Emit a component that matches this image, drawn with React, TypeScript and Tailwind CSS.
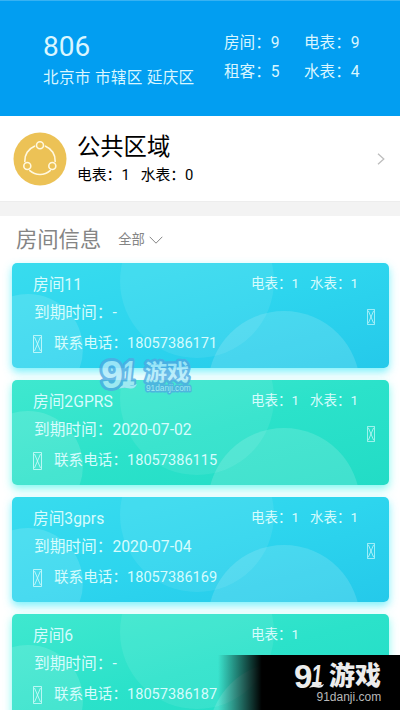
const rooms = [
  { name: '房间11', due: '-', phone: '18057386171', power: 1, water: 1, tone: 'sky' },
  { name: '房间2GPRS', due: '2020-07-02', phone: '18057386115', power: 1, water: 1, tone: 'mint' },
  { name: '房间3gprs', due: '2020-07-04', phone: '18057386169', power: 1, water: 1, tone: 'sky' },
  { name: '房间6', due: '-', phone: '18057386187', power: 1, water: null, tone: 'mint' },
];

const tones: Record<string, string> = {
  sky: 'from-[#38dcee] via-[#2dd5ee] to-[#25c9ea] shadow-[0_4px_9px_rgba(70,235,250,0.7)]',
  mint: 'from-[#3fe8cf] via-[#2be2ca] to-[#22dcc6] shadow-[0_4px_9px_rgba(80,245,235,0.7)]',
};

function MissingGlyph({ className }: { className: string }) {
  return (
    <svg className={className} viewBox="0 0 9 18" preserveAspectRatio="none" fill="none" stroke="currentColor" strokeWidth="0.8">
      <path d="M.5 .5h8v17h-8z M1.5 2l6 14 M7.5 2l-6 14" />
    </svg>
  );
}

function Header() {
  return (
    <header className="flex h-[116px] border-t border-[#37b2f3] bg-[#029ef1] pl-[43px] text-[15.6px] text-[#d9f6ff]">
      <div className="w-[181px] pt-[30px]">
        <div className="h-8 text-[28px] leading-8">806</div>
        <div className="mt-[3px] h-6 leading-6 tracking-[0.02em] whitespace-nowrap">北京市 市辖区 延庆区</div>
      </div>
      <div className="grid h-[59px] grid-cols-[80px_80px] grid-rows-[29px_29px] pt-[28px] leading-[29px] whitespace-nowrap">
        <span>房间：9</span>
        <span>电表：9</span>
        <span>租客：5</span>
        <span>水表：4</span>
      </div>
    </header>
  );
}

function PublicArea() {
  return (
    <section className="flex h-[86px] items-center border-b border-[#ededed] pr-[15px] pl-[13px] text-black">
      <svg className="size-[54px] shrink-0" viewBox="0 0 54 54" fill="none" stroke="#fff8df" strokeWidth="1.6">
        <circle cx="27" cy="27" r="26.5" fill="#ecc256" stroke="none" />
        <path d="M21.5 14.2A15.5 15.5 0 0 0 11.8 29.5 M32.5 14.2A15.5 15.5 0 0 1 42.2 29.5 M16.8 38.6A15.5 15.5 0 0 0 37.2 38.6" strokeLinecap="round" />
        <circle cx="27" cy="13.3" r="3.5" />
        <circle cx="14.3" cy="34" r="3.5" />
        <circle cx="39.3" cy="34" r="3.5" />
      </svg>
      <div className="ml-[10px] flex-1">
        <div className="h-8 text-[23.3px] leading-8">公共区域</div>
        <div className="flex h-6 gap-[11px] text-[14.8px] leading-6">
          <span>电表：1</span>
          <span>水表：0</span>
        </div>
      </div>
      <svg className="h-3 w-2" viewBox="0 0 8 12" fill="none" stroke="#bdbdbd" strokeWidth="1.3">
        <path d="M1 .7l5.8 5.3L1 11.3" />
      </svg>
    </section>
  );
}

function RoomCard({ room }: { room: (typeof rooms)[number] }) {
  return (
    <article className={`relative h-[105px] shrink-0 overflow-hidden rounded-[5px] bg-gradient-to-br text-[#d6fcfd] ${tones[room.tone]}`}>
      <svg className="absolute inset-0 h-[105px] w-[377px]" viewBox="0 0 377 105" fill="#fff">
        <circle cx="16" cy="86" r="55" fillOpacity="0.13" />
        <circle cx="185" cy="18" r="77" fillOpacity="0.08" />
        <circle cx="272" cy="124" r="76" fillOpacity="0.14" />
      </svg>
      <div className="relative flex h-full pr-[14px] pl-[21px] whitespace-nowrap">
        <div className="w-[218px] pt-[9px]">
          <div className="h-7 text-[15.7px] leading-[26px]">{room.name}</div>
          <div className="h-7 pl-px text-[15.7px] leading-[26px]">到期时间：{room.due}</div>
          <div className="flex h-8 items-center text-[14.6px]">
            <MissingGlyph className="mr-3 h-[18px] w-[9px]" />
            联系电话：{room.phone}
          </div>
        </div>
        <div className="flex w-[116px] gap-[11px] pt-2 text-[13.5px] leading-6">
          <span>电表：{room.power}</span>
          {room.water !== null && <span>水表：{room.water}</span>}
        </div>
        <MissingGlyph className="mt-[46px] h-4 w-2" />
      </div>
    </article>
  );
}

// the numeral mark, 30x24 in its own units
function Mark() {
  return (
    <g fontFamily="'Liberation Sans', sans-serif" fontWeight="700">
      <text x="0" y="23.5" fontSize="33">9</text>
      <text x="19" y="21" fontSize="29" transform="skewX(-6)" textLength="11" lengthAdjust="spacingAndGlyphs">1</text>
      <path d="M15 24Q19 19 23 20Q25 22.500 30 20Q28 25 23 23.500Q19 22.500 15 24Z" stroke="none" />
    </g>
  );
}

function Watermark() {
  return (
    <svg
      className="h-[44px] w-[100px]"
      viewBox="0 0 100 44"
      fill="#b4eafa"
      stroke="#4fa9e2"
      strokeWidth="5"
      paintOrder="stroke"
      strokeLinejoin="round"
    >
      <g transform="translate(6 6) scale(1.2)">
        <Mark />
      </g>
      <text x="50" y="26" fontSize="22" fontWeight="700" fontFamily="'Noto Sans CJK SC', sans-serif">游戏</text>
      <text x="51" y="37" fontSize="8.3" strokeWidth="3" fontFamily="'Liberation Sans', sans-serif">91danji.com</text>
    </svg>
  );
}

function CornerBrand() {
  return (
    <div className="absolute right-0 bottom-0 flex h-[55px] w-[182px] justify-end bg-gradient-to-r from-transparent to-black to-[24%]">
      <svg className="h-[55px] w-[110px]" viewBox="0 0 110 55" fill="#ececec">
        <g transform="translate(4 9)">
          <Mark />
        </g>
        <text x="39" y="30" fontSize="26" fontWeight="900" fontFamily="'Noto Sans CJK SC', sans-serif">游戏</text>
        <text x="26.5" y="46" fontSize="12" fill="#b8b8b8" fontFamily="'Liberation Sans', sans-serif">91danji.com</text>
      </svg>
    </div>
  );
}

export default function App() {
  return (
    <main className="relative h-[710px] w-[400px] overflow-hidden bg-white font-[Roboto,'Noto_Sans_CJK_SC',sans-serif]" lang="zh-CN">
      <Header />
      <PublicArea />
      <div className="h-[14px] bg-[#f3f3f3]" />
      <section>
        <div className="flex h-[46.5px] items-center pt-px pl-4 text-[#858585]">
          <h2 className="text-[21.3px]">房间信息</h2>
          <span className="ml-[17px] text-[13.3px]">全部</span>
          <svg className="ml-1 h-2 w-[14px]" viewBox="0 0 14 8" fill="none" stroke="currentColor">
            <path d="M.7 .8L7 7.2l6.3-6.4" />
          </svg>
        </div>
        <div className="flex flex-col gap-[12.2px] pr-[11px] pl-3">
          {rooms.map((room) => (
            <RoomCard key={room.name} room={room} />
          ))}
        </div>
      </section>
      <div className="absolute top-[354px] left-[95px] opacity-80">
        <Watermark />
      </div>
      <CornerBrand />
    </main>
  );
}
